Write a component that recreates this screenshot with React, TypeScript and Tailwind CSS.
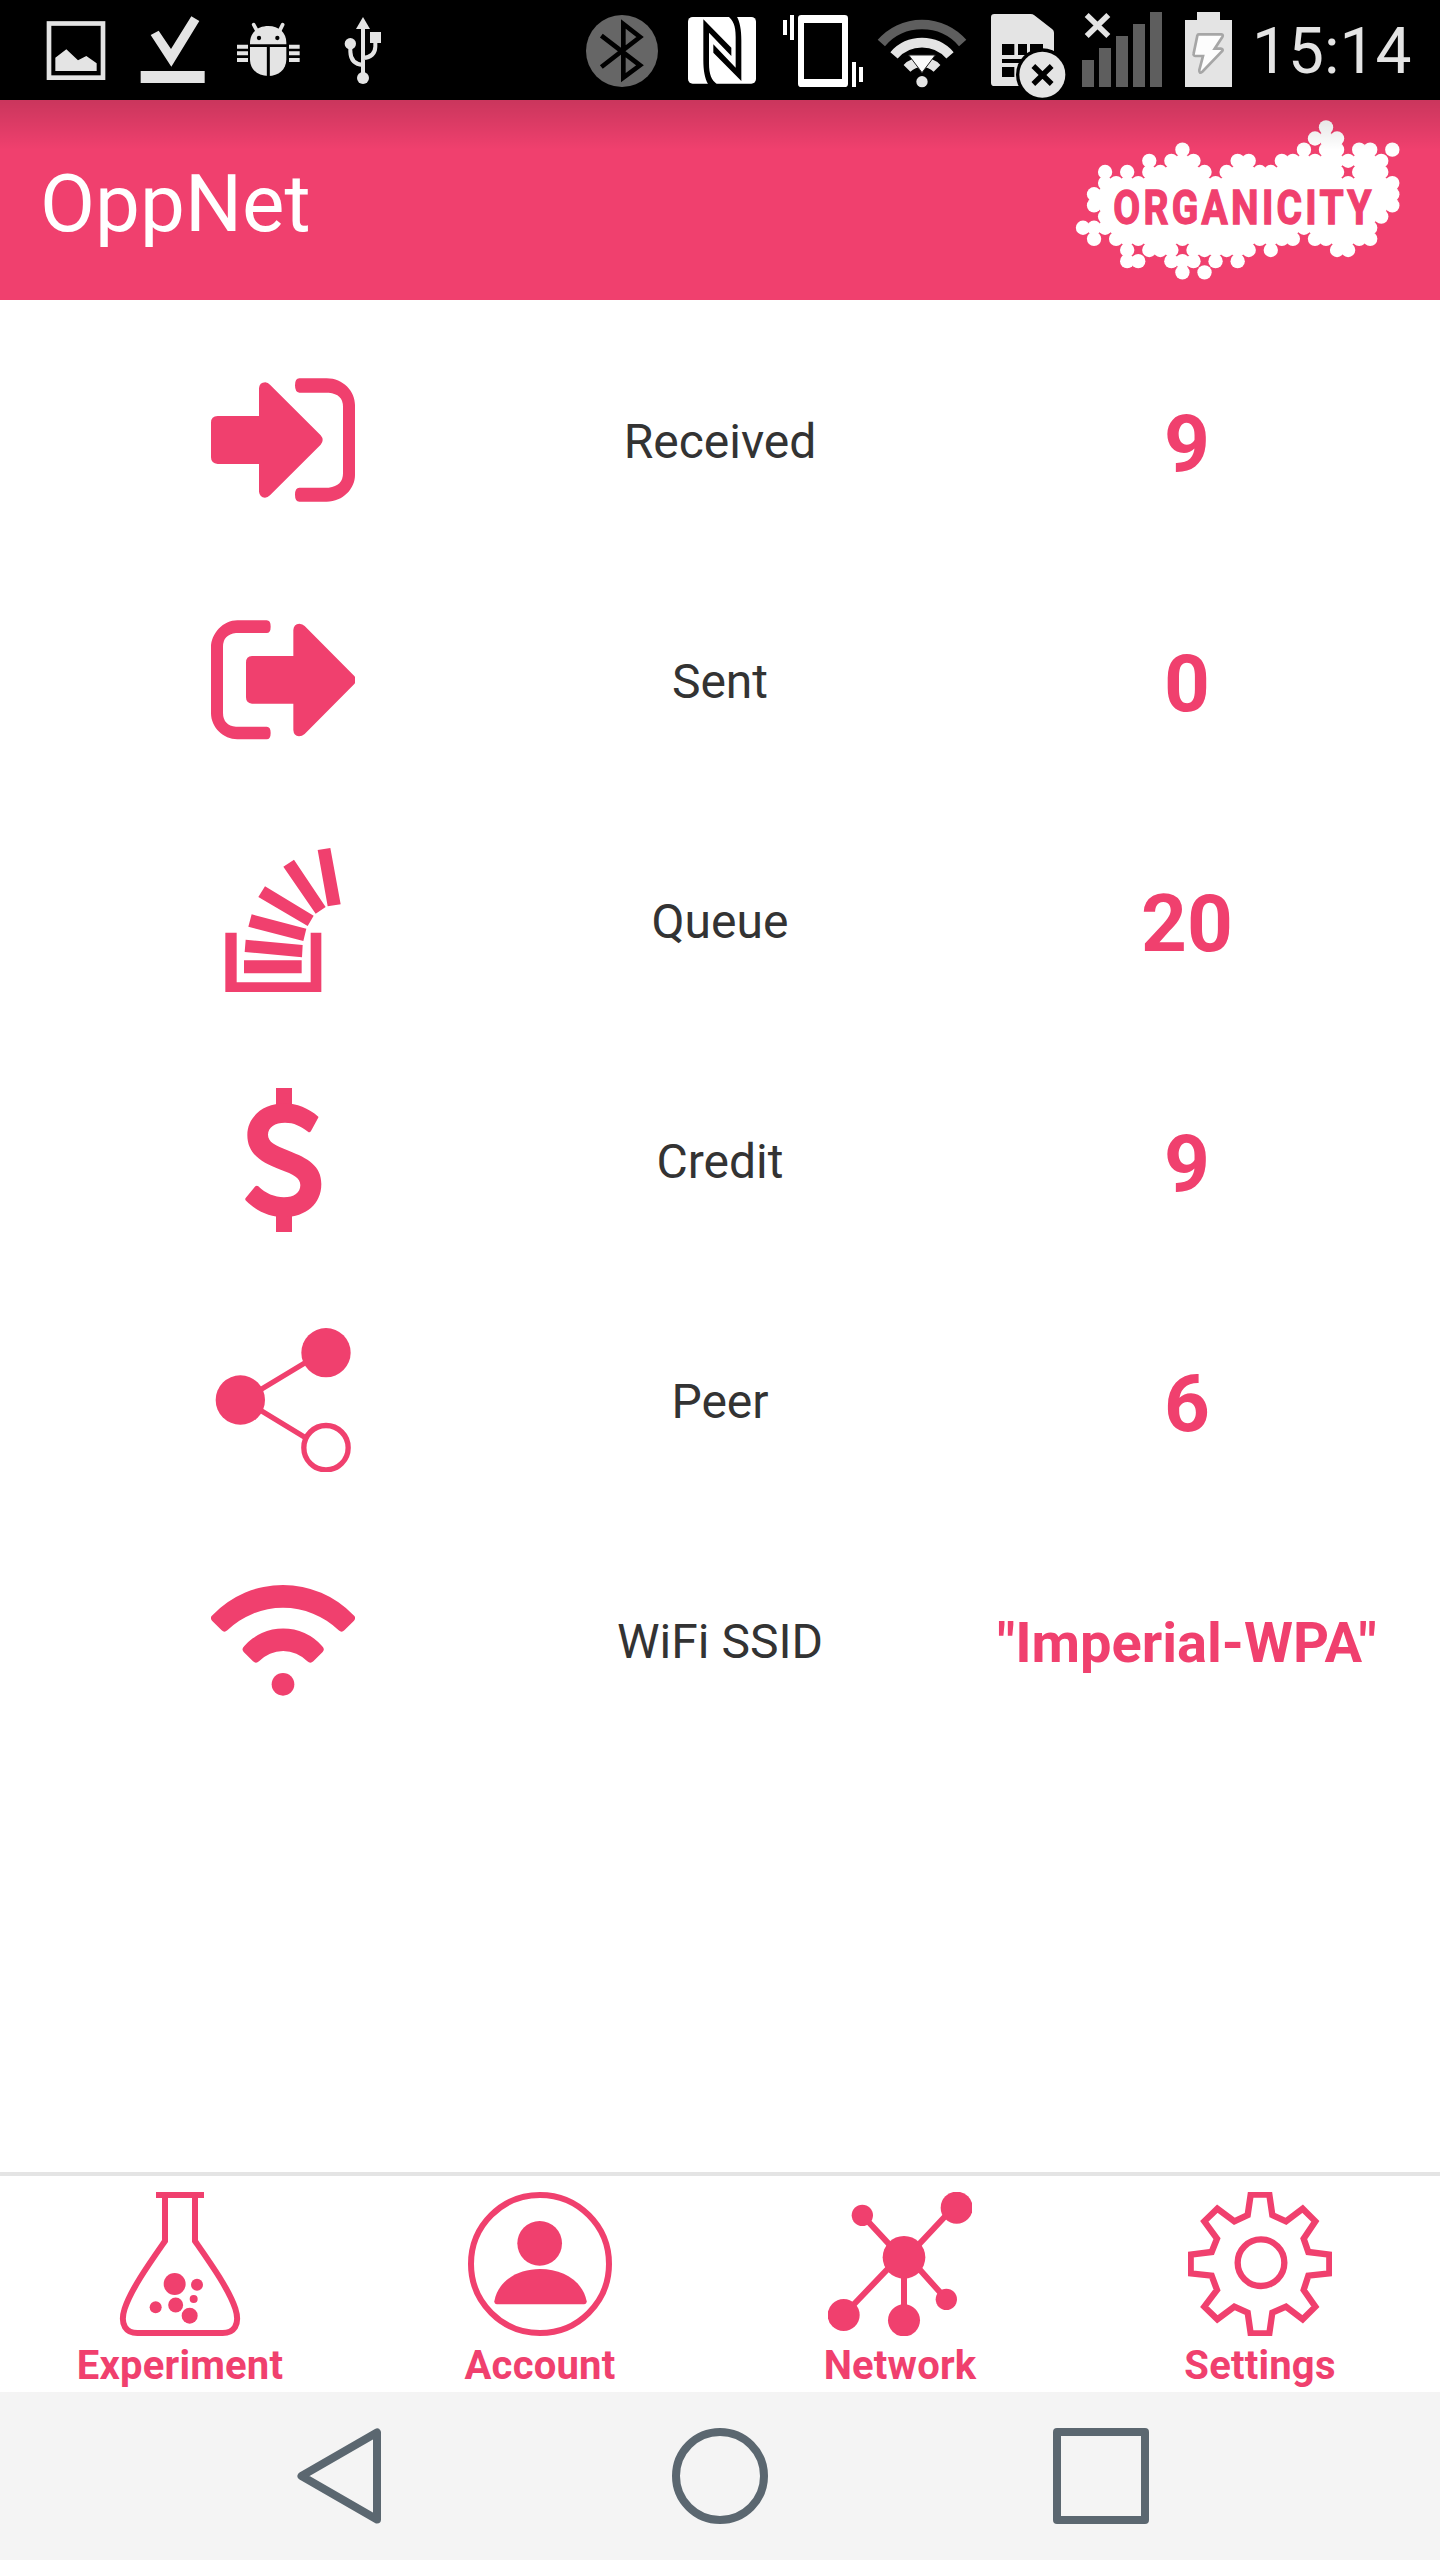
import type { ReactNode } from "react";

const PINK = "#f0406e";
const LIGHT = "#e4e4e4";

/* ---------- status bar ---------- */

function StatusIcon({ x, w, className, children }: { x: number; w: number; className: string; children: ReactNode }) {
  return (
    <svg className={`h-[100px] shrink-0 ${className}`} viewBox={`${x} 0 ${w} 300`} fill={LIGHT}>
      {children}
    </svg>
  );
}

function StatusBar() {
  return (
    <div className="flex h-[100px] shrink-0 items-center bg-black">
      <StatusIcon x={0} w={369} className="w-[123px]">
        <rect x="147" y="70.500" width="162" height="162.500" fill="none" stroke={LIGHT} strokeWidth="14" />
        <path d="M166 213V173L199 148L234 181L259 168L290 190V213Z" />
      </StatusIcon>
      <StatusIcon x={369} w={291} className="w-[97px]">
        <rect x="422" y="213" width="192" height="36" />
        <path d="M452 105L476 92L513 147L574 49L598 63L514 200Z" />
      </StatusIcon>
      <StatusIcon x={660} w={300} className="w-[100px]">
        <path d="M750 133V128C750 98 773 78 805 78S859 98 859 128V133Z" />
        <path d="M750 141H859V178C859 210 835 228 805 228S750 210 750 178Z" />
        <path d="M761 74L772 94M848 74L838 94" stroke={LIGHT} strokeWidth="11" strokeLinecap="round" />
        <path d="M805 141V228" stroke="#000" strokeWidth="9" />
        <circle cx="777" cy="114" r="6.500" fill="#000" />
        <circle cx="832" cy="114" r="6.500" fill="#000" />
        <path d="M711 140.500H744M711 160H744M711 180H744M867 140.500H899M867 160H899M867 180H899" stroke={LIGHT} strokeWidth="12" />
      </StatusIcon>
      <StatusIcon x={960} w={240} className="w-[80px]">
        <path d="M1089 51L1110 87H1068Z" />
        <path d="M1089 80V235M1051 131V155Q1052 192 1089 195M1126 128V140Q1125 172 1089 174" fill="none" stroke={LIGHT} strokeWidth="12" />
        <circle cx="1089" cy="234" r="18" />
        <circle cx="1051" cy="131" r="17" />
        <rect x="1110" y="96" width="33" height="33" />
      </StatusIcon>

      <StatusIcon x={60} w={270} className="ml-auto w-[90px]">
        <circle cx="186" cy="153" r="108" fill="#666" />
        <path d="M124 107L240 196L190 233V72L240 111L124 201" fill="none" stroke="#000" strokeWidth="14" />
      </StatusIcon>
      <StatusIcon x={330} w={300} className="w-[100px]">
        <rect x="384" y="51" width="204" height="200" rx="14" fill="#fff" />
        <path d="M430 58L514 143V168L447 98V190C447 225 455 240 470 252H444C434 235 430 210 430 180Z" fill="#000" />
        <path d="M544 243L460 158V133L527 203V111C527 76 519 61 504 49H530C540 66 544 91 544 121Z" fill="#000" />
      </StatusIcon>
      <StatusIcon x={630} w={300} className="w-[100px]">
        <path
          d="M724 45H854Q864 45 864 55V251Q864 261 854 261H724Q714 261 714 251V55Q714 45 724 45ZM732 69V237H846V69Z"
          fill="#fff"
          fillRule="evenodd"
        />
        <path d="M675 60V105M696 45V120M882 186V261M903 201V246" stroke="#fff" strokeWidth="12" />
      </StatusIcon>
      <StatusIcon x={930} w={330} className="w-[110px]">
        <path d="M964 129A162 162 0 0 1 1208 129" fill="none" stroke="#5e5e5e" strokeWidth="29" />
        <path d="M1002 166A112 112 0 0 1 1170 166" fill="none" stroke={LIGHT} strokeWidth="29" />
        <path d="M1041 205A64 64 0 0 1 1131 205" fill="none" stroke={LIGHT} strokeWidth="29" />
        <path d="M1046 165H1126L1086 218Z" fill="#fbfbfb" stroke="#222" strokeWidth="3" />
        <circle cx="1086" cy="245" r="17" />
      </StatusIcon>
      <StatusIcon x={0} w={285} className="w-[95px]">
        <path d="M43 42H152Q158 42 163 46L217 88Q222 92 222 98V258H43Q33 258 33 248V52Q33 42 43 42Z" />
        <path d="M66 132H103V165H66ZM114 132H141V165H114ZM150 132H189V165H150ZM66 177H130V189H66ZM66 201H103V231H66Z" fill="#000" />
        <circle cx="187" cy="224" r="79" fill="#000" />
        <circle cx="187" cy="224" r="69" />
        <path d="M160 198L215 252M215 198L160 252" stroke="#000" strokeWidth="16" />
      </StatusIcon>
      <StatusIcon x={285} w={300} className="w-[100px]">
        <path d="M320 45L385 108M385 45L320 108" stroke={LIGHT} strokeWidth="17" />
        <path d="M324 180V261M375 144V261M426 108V261M477 72V261M528 36V261" stroke="#5e5e5e" strokeWidth="36" />
      </StatusIcon>
      <StatusIcon x={585} w={210} className="w-[70px]">
        <path d="M651 36H720V60H756V261H615V60H651Z" />
        <path
          d="M656 103H724Q731 104 727 111L704 146H722Q731 147 727 153L667 215Q657 223 658 210L669 168H646Q639 167 641 160L652 107Q653 103 656 103Z"
          fill="#fdfdfd"
          stroke="#a6a6a6"
          strokeWidth="8"
        />
      </StatusIcon>
      <div className="w-[195px] pt-1 pl-[7px] text-[64px] leading-none text-[#e4e4e4]">15:14</div>
    </div>
  );
}

/* ---------- brand logo: a cloud of dots on a square lattice ---------- */

// For each lattice column, the occupied row ranges (inclusive).
const CLOUD: number[][][] = [
  [[9, 9]],
  [[6, 7], [9, 10]],
  [[4, 9]],
  [[5, 10]],
  [[4, 12]],
  [[5, 10], [12, 12]],
  [[3, 11]],
  [[4, 11]],
  [[3, 12]],
  [[2, 10], [12, 13]],
  [[3, 12]],
  [[4, 11], [13, 13]],
  [[5, 12]],
  [[4, 11]],
  [[3, 12]],
  [[3, 11]],
  [[4, 10]],
  [[4, 11]],
  [[3, 10]],
  [[3, 10]],
  [[2, 9]],
  [[1, 1], [3, 10]],
  [[0, 10]],
  [[1, 11]],
  [[3, 3], [5, 11]],
  [[2, 10]],
  [[2, 10]],
  [[3, 8]],
  [[2, 2], [5, 7]],
];

const filled = (c: number, r: number) => (CLOUD[c] ?? []).some(([a, b]) => r >= a && r <= b);
const cx = (c: number) => 69 + c * 33.140;
const cy = (r: number) => 82 + r * 33.460;

function Logo() {
  const cells: [number, number][] = [];
  CLOUD.forEach((ranges, c) => ranges.forEach(([a, b]) => {
    for (let r = a; r <= b; r++) cells.push([c, r]);
  }));
  return (
    <svg className="h-[162px] w-[325px] overflow-visible" viewBox="45 57 975 486" fill="#fff">
      {cells.map(([c, r]) => (
        <circle key={`d${c}-${r}`} cx={cx(c)} cy={cy(r)} r="21.500" />
      ))}
      {cells
        .filter(([c, r]) => filled(c + 1, r) && filled(c, r + 1) && filled(c + 1, r + 1))
        .map(([c, r]) => (
          <rect key={`s${c}-${r}`} x={cx(c)} y={cy(r)} width="33.5" height="33.8" />
        ))}
      <text
        x="160"
        y="372"
        fill={PINK}
        stroke={PINK}
        strokeWidth="4"
        fontFamily="Roboto"
        fontWeight="700"
        fontSize="143"
        letterSpacing="12"
        textLength="784"
        lengthAdjust="spacingAndGlyphs"
      >
        ORGANICITY
      </text>
    </svg>
  );
}

/* ---------- statistics ---------- */

function StatIcon({ y, children }: { y: number; children: ReactNode }) {
  return (
    <svg className="size-36" viewBox={`93 ${y} 432 432`} fill={PINK}>
      {children}
    </svg>
  );
}

const stats = [
  {
    label: "Received",
    value: "9",
    icon: (
      <StatIcon y={54}>
        <path d="M113 198H237V115Q238 97 256 97Q264 98 270 104L422 256Q434 270 422 284L270 436Q263 443 255 443Q239 441 237 425V342H113Q93 340 93 322V218Q93 198 113 198Z" />
        <path d="M358 85H440C490 85 525 125 525 165V375C525 415 490 455 440 455H358Q345 455 345 434Q345 413 358 413H446Q489 408 489 370V170Q489 132 446 128H358Q345 127 345 106Q345 85 358 85Z" />
      </StatIcon>
    ),
  },
  {
    label: "Sent",
    value: "0",
    icon: (
      <StatIcon y={774}>
        <path d="M216 918H340V840Q341 822 358 821Q368 822 374 828L523 978Q532 990 523 1002L374 1152Q366 1159 357 1159Q341 1157 340 1140V1061H216Q198 1060 198 1042V938Q198 918 216 918Z" />
        <path d="M260 811H172C130 811 93 850 93 893V1090C93 1132 130 1168 172 1168H260Q272 1168 272 1149Q272 1130 260 1130H168Q129 1126 129 1088V890Q129 854 168 849H260Q272 849 272 830Q272 811 260 811Z" />
      </StatIcon>
    ),
  },
  {
    label: "Queue",
    value: "20",
    icon: (
      <StatIcon y={84}>
        <path d="M136 338H170V487H392V338H424V516H136Z" />
        <path d="M192 421H365V460H192ZM197 359L368 375L366 412L194 396ZM215 283L379 326L370 363L205 320ZM255 199L401 287L383 318L235 231ZM342 119L437 261L407 281L310 140ZM413 90L451 84L482 253L443 259Z" />
      </StatIcon>
    ),
  },
  {
    label: "Credit",
    value: "9",
    icon: (
      <StatIcon y={804}>
        <path d="M288 804H336V862H288ZM288 1178H336V1236H288Z" />
        {/* upper bowl, spine and lower bowl as one closed outline */}
        <path d="M415 890C385 865 350 850 315 850C250 850 202 890 202 945C202 1000 240 1025 302 1049C340 1063 361 1073 361 1095C361 1118 342 1132 312 1132C284 1132 256 1120 235 1099Q230 1095 226 1099L197 1134Q194 1138 198 1142C230 1174 270 1191 312 1191C378 1191 424 1152 424 1092C424 1037 384 1015 326 992C285 976 264 966 264 944C264 922 285 908 315 908C342 908 362 918 384 935Q389 939 393 933L413 896Q416 892 415 890Z" />
      </StatIcon>
    ),
  },
  {
    label: "Peer",
    value: "6",
    icon: (
      <StatIcon y={84}>
        <circle cx="438" cy="158" r="74" />
        <circle cx="181" cy="300" r="74" />
        <circle cx="438" cy="443" r="66.500" fill="none" stroke={PINK} strokeWidth="16" />
        <path d="M240 270L378 187M240 330L378 414" stroke={PINK} strokeWidth="16" />
      </StatIcon>
    ),
  },
  {
    label: "WiFi SSID",
    value: '"Imperial-WPA"',
    small: true,
    icon: (
      <StatIcon y={804}>
        <path d="M98 945A292 292 0 0 1 520 945Q530 953 522 962L493 991Q485 999 476 991A240 240 0 0 0 142 991Q133 999 125 991L96 962Q88 953 98 945Z" />
        <path d="M193 1038A155 155 0 0 1 426 1038Q436 1047 428 1056L400 1084Q391 1092 382 1084A100 100 0 0 0 237 1084Q228 1092 219 1084L191 1056Q183 1047 193 1038Z" />
        <circle cx="309" cy="1153" r="34" />
      </StatIcon>
    ),
  },
];

/* ---------- tab bar ---------- */

function TabIcon({ children }: { children: ReactNode }) {
  return (
    <svg className="size-36" viewBox="0 0 432 432" fill={PINK}>
      {children}
    </svg>
  );
}

const tabs = [
  {
    label: "Experiment",
    icon: (
      <TabIcon>
        <path d="M144 0H288V18H144Z" />
        <path
          d="M171 10V147C125 213 70 290 50 350C34 400 56 423 88 423H344C376 423 398 400 382 350C362 290 307 213 261 147V10"
          fill="none"
          stroke={PINK}
          strokeWidth="18"
        />
        <circle cx="200" cy="276" r="33" />
        <circle cx="267" cy="278" r="18" />
        <circle cx="257" cy="321" r="12" />
        <circle cx="203" cy="339" r="22.500" />
        <circle cx="143" cy="346" r="18" />
        <circle cx="245" cy="371" r="24" />
      </TabIcon>
    ),
  },
  {
    label: "Account",
    icon: (
      <TabIcon>
        <circle cx="216" cy="216" r="207" fill="none" stroke={PINK} strokeWidth="18" />
        <circle cx="215" cy="154" r="67" />
        <path d="M79 328C90 265 150 231 216 231S344 265 356 328Q356 337 348 337H87Q79 337 79 328Z" />
      </TabIcon>
    ),
  },
  {
    label: "Network",
    icon: (
      <TabIcon>
        <path d="M103 70L228 205L386 36M47 369L228 180L355 322M228 196V385" fill="none" stroke={PINK} strokeWidth="18" />
        <circle cx="103" cy="70" r="32" />
        <circle cx="386" cy="47" r="48" />
        <circle cx="228" cy="196" r="64" />
        <circle cx="355" cy="322" r="32" />
        <circle cx="47" cy="369" r="48" />
        <circle cx="228" cy="385" r="48" />
      </TabIcon>
    ),
  },
  {
    label: "Settings",
    icon: (
      <TabIcon>
        <path
          d="M188 8H244L253 69L294 88L344 50L382 88L347 140L361 180L424 188V244L361 251L347 294L382 344L344 382L294 344L253 362L244 424H188L179 362L139 344L88 382L49 344L87 294L71 251L8 244V188L71 180L87 140L49 88L88 50L139 88L179 69Z"
          fill="none"
          stroke={PINK}
          strokeWidth="19"
        />
        <circle cx="219" cy="212" r="70" fill="none" stroke={PINK} strokeWidth="19" />
      </TabIcon>
    ),
  },
];

export default function App() {
  return (
    <div className="flex h-[2560px] w-[1440px] flex-col overflow-hidden bg-white font-['Roboto',sans-serif]">
      <StatusBar />

      <header className="relative flex h-[200px] shrink-0 items-center justify-between bg-[#f0406e] pr-10 pl-10">
        <h1 className="pt-[8px] text-[80px] leading-none text-white">OppNet</h1>
        <Logo />
        <div className="absolute inset-x-0 top-0 h-[50px] bg-linear-to-b from-black/16 to-transparent" />
      </header>

      <main className="flex-1 pt-5">
        {stats.map((s) => (
          <div key={s.label} className="grid h-60 grid-cols-[406px_468px_466px] items-center justify-items-center pl-20">
            {s.icon}
            <div className="pt-1 text-[48px] leading-none text-[#333]">{s.label}</div>
            <div
              className={
                s.small
                  ? "pt-[5px] text-[56px] leading-none font-bold text-[#f0406e]"
                  : "pt-2 text-[80px] leading-none font-bold text-[#f0406e]"
              }
            >
              {s.value}
            </div>
          </div>
        ))}
      </main>

      <nav className="grid h-[220px] shrink-0 grid-cols-4 border-t-4 border-[#e4e4e4] pt-4">
        {tabs.map((t) => (
          <div key={t.label} className="flex flex-col items-center">
            {t.icon}
            <span className="mt-[10px] text-[40px] leading-none font-bold tracking-[0.2px] text-[#f0406e]">{t.label}</span>
          </div>
        ))}
      </nav>

      <footer className="flex h-[168px] shrink-0 items-center justify-center gap-[285px] bg-[#f4f4f4]">
        <svg className="size-24" viewBox="0 0 96 96" fill="none" stroke="#5b6770" strokeWidth="8" strokeLinejoin="round">
          <path d="M86 4.500V91.500L10.500 48Z" />
        </svg>
        <svg className="size-24" viewBox="0 0 96 96" fill="none" stroke="#5b6770" strokeWidth="8">
          <circle cx="48" cy="48" r="44" />
        </svg>
        <svg className="size-24" viewBox="0 0 96 96" fill="none" stroke="#5b6770" strokeWidth="8">
          <rect x="4" y="4" width="88" height="88" strokeLinejoin="round" />
        </svg>
      </footer>
    </div>
  );
}
